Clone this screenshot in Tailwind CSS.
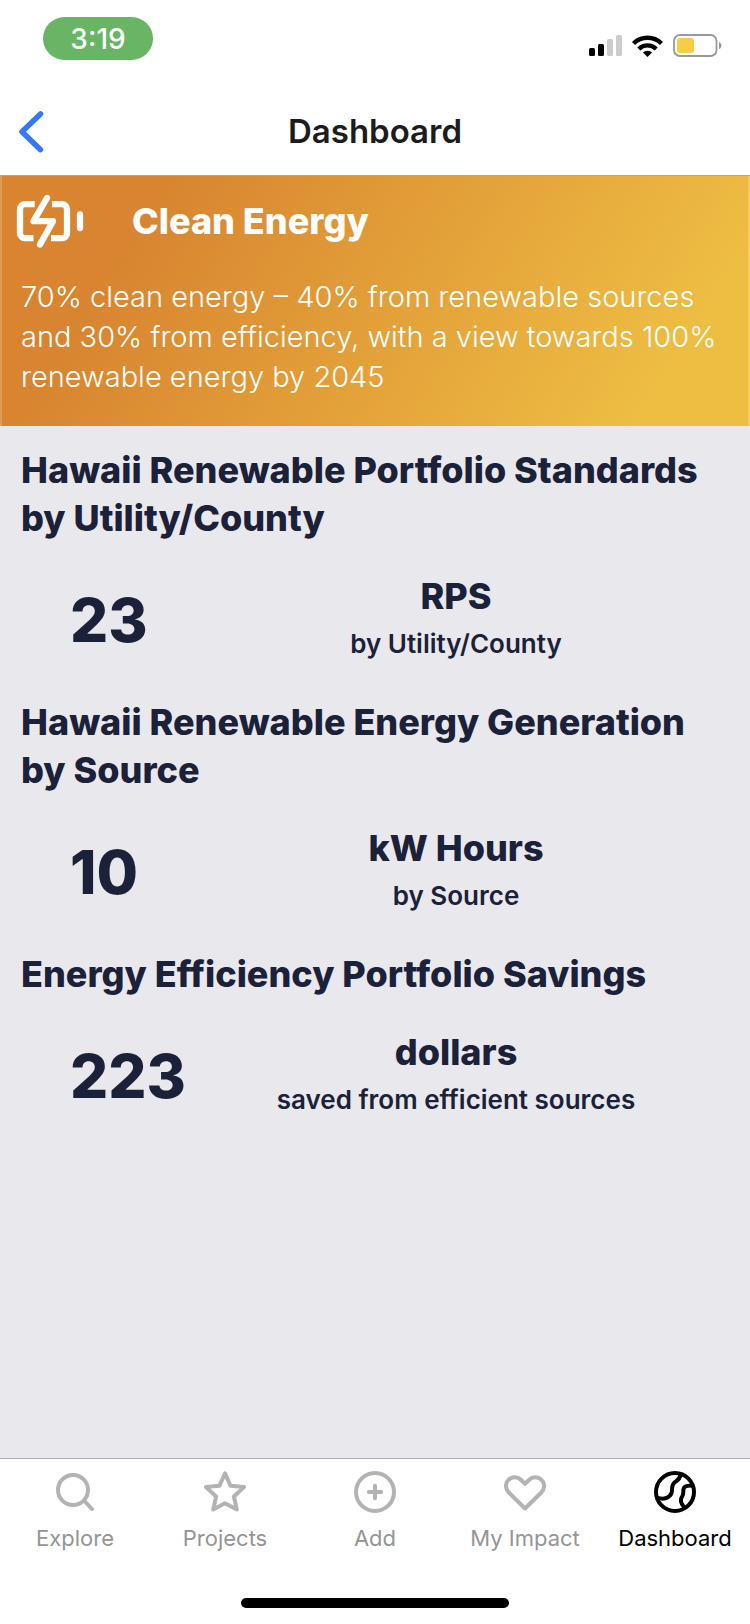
<!DOCTYPE html>
<html lang="en">
<head>
    <meta charset="UTF-8">
    <meta name="viewport" content="width=device-width, initial-scale=1.0">
    <title>Dashboard - Clean Energy</title>
    <script src="https://cdn.jsdelivr.net/npm/@tailwindcss/browser@4"></script>
</head>
<body class="min-h-screen flex flex-col bg-[#e9e8ed] text-[#1a2138] font-['Inter','Liberation_Sans',sans-serif]">
    <!-- Status bar -->
    <div class="flex items-start justify-between h-22 pt-[17px] pl-[43px] pr-7 bg-white">
        <div class="flex items-center justify-center w-[110px] h-[43px] rounded-full bg-[#67b565] text-white text-[28px] font-medium">3:19</div>
        <div class="flex items-center gap-[10px] pt-[17px]">
            <svg class="w-[33px] h-[21px]" viewBox="0 0 33 21">
                <rect x="0" y="13" width="6" height="8" rx="1.5" fill="#000"/>
                <rect x="9" y="9" width="6" height="12" rx="1.5" fill="#000"/>
                <rect x="18" y="4" width="6" height="17" rx="1.5" fill="#ccc"/>
                <rect x="27" y="0" width="6" height="21" rx="1.5" fill="#ccc"/>
            </svg>
            <svg class="w-[31px] h-[22px]" viewBox="0 0 31 22">
                <path d="M1.5 8.5a20 20 0 0 1 28 0" fill="none" stroke="#000" stroke-width="4.4"/>
                <path d="M6.8 14a12.4 12.4 0 0 1 17.4 0" fill="none" stroke="#000" stroke-width="4.2"/>
                <path d="M15.5 22l-4.6-4.4a6.7 6.7 0 0 1 9.2 0z" fill="#000"/>
            </svg>
            <svg class="w-[49px] h-[23px]" viewBox="0 0 49 23">
                <rect x="1" y="1" width="42.5" height="21" rx="6" fill="#fff" stroke="#999" stroke-width="1.8"/>
                <rect x="4" y="4" width="17" height="15" rx="3" fill="#f6cd45"/>
                <path d="M46 8q2.5 1 2.5 3.5T46 15z" fill="#999"/>
            </svg>
        </div>
    </div>

    <!-- Header -->
    <header class="grid grid-cols-[1fr_auto_1fr] items-center h-22 px-[18px] bg-white border-b border-[#a7a7aa]">
        <button type="button" aria-label="Back" class="justify-self-start">
            <svg class="w-[26px] h-[42px]" viewBox="0 0 26 42">
                <path d="M22.5 3L4 20.7l18.5 18" fill="none" stroke="#3478f6" stroke-width="5.5" stroke-linecap="round" stroke-linejoin="round"/>
            </svg>
        </button>
        <h1 class="text-[33px] leading-12 pb-[2px] font-semibold text-[#1c1c1e]">Dashboard</h1>
    </header>

    <main class="grow">
        <!-- Clean energy banner -->
        <section class="pt-[17px] pb-[29px] text-white border-x-2 border-white/20 bg-linear-[122deg,#d88430_18%,#eebe43_88%] bg-origin-border">
            <div class="flex items-center gap-12 px-[14px]">
                <svg class="w-[68px] h-[56px]" viewBox="0 0 68 56" fill="none" stroke="#fff" stroke-width="6.3" stroke-linecap="round" stroke-linejoin="round">
                    <path d="M18.7 11.2H9a5 5 0 0 0-5 5v24a5 5 0 0 0 5 5h8.500M36 11.200h10a5 5 0 0 1 5 5v24a5 5 0 0 1-5 5H35" stroke-linecap="butt"/>
                    <path d="M31 5L17.500 28.200H37L24 51.500"/>
                    <path d="M64 21.500v13.500"/>
                </svg>
                <h2 class="text-[36px] leading-[56px] font-extrabold">Clean Energy</h2>
            </div>
            <p class="mt-7 px-[19px] text-[29px] leading-10 font-light">70% clean energy – 40% from renewable sources and 30% from efficiency, with a view towards 100% renewable energy by 2045</p>
        </section>

        <section class="pt-5 text-[36px] leading-12 font-extrabold">
            <h3 class="px-[21px]">Hawaii Renewable Portfolio Standards by Utility/County</h3>
            <div class="flex items-center py-[30px] pl-[70px] pr-[50px]">
                <div class="w-[142px] text-[60px]">23</div>
                <div class="grow text-center">
                    <div>RPS</div>
                    <div class="text-[26px] font-semibold">by Utility/County</div>
                </div>
            </div>

            <h3 class="px-[21px]">Hawaii Renewable Energy Generation by Source</h3>
            <div class="flex items-center py-[30px] pl-[70px] pr-[50px]">
                <div class="w-[142px] text-[60px]">10</div>
                <div class="grow text-center">
                    <div>kW Hours</div>
                    <div class="text-[26px] font-semibold">by Source</div>
                </div>
            </div>

            <h3 class="px-[21px]">Energy Efficiency Portfolio Savings</h3>
            <div class="flex items-center py-[30px] pl-[70px] pr-[50px]">
                <div class="w-[142px] text-[60px]">223</div>
                <div class="grow text-center">
                    <div>dollars</div>
                    <div class="text-[26px] font-semibold">saved from efficient sources</div>
                </div>
            </div>
        </section>
    </main>

    <!-- Tab bar -->
    <footer class="bg-white border-t border-[#b0b0b4] pt-3 pb-4">
        <nav class="grid grid-cols-5 text-[22px] leading-7 text-[#959595]">
            <a href="#explore" class="flex flex-col items-center gap-[11px]">
                <svg class="w-[42px] h-[42px]" viewBox="0 0 42 42" fill="none" stroke="#b3b3b3" stroke-width="4" stroke-linecap="round">
                    <circle cx="19" cy="19" r="15"/>
                    <path d="M30 29.5l8 8.5"/>
                </svg>
                Explore
            </a>
            <a href="#projects" class="flex flex-col items-center gap-[11px]">
                <svg class="w-[42px] h-[42px]" viewBox="0 0 42 42" fill="none" stroke="#b3b3b3" stroke-width="4" stroke-linejoin="round">
                    <path d="M21 2.3l5.5 12.4L40 16.1 29.9 25.5 32.8 38.5 21 32.3 9.2 38.5l2.9-13L2 16.1l13.5-1.4z"/>
                </svg>
                Projects
            </a>
            <a href="#add" class="flex flex-col items-center gap-[11px]">
                <svg class="w-[42px] h-[42px]" viewBox="0 0 42 42" fill="none" stroke="#b3b3b3" stroke-width="4" stroke-linecap="round">
                    <circle cx="21" cy="21" r="19"/>
                    <path d="M21 14.8v12.4M14.8 21h12.4"/>
                </svg>
                Add
            </a>
            <a href="#impact" class="flex flex-col items-center gap-[11px]">
                <svg class="w-[42px] h-[42px]" viewBox="0 0 42 42" fill="none" stroke="#b3b3b3" stroke-width="4" stroke-linejoin="round">
                    <path d="M21 37.5L4.7 21.5C1 17.5 1 11.8 4.7 8.7 8 5.4 13.6 5.6 16.8 8.7L21 12.8l4.2-4.1c3.2-3.1 8.8-3.3 12.1 0 3.7 3.1 3.7 8.8 0 12.8z"/>
                </svg>
                My Impact
            </a>
            <a href="#dashboard" aria-current="page" class="flex flex-col items-center gap-[11px] text-black">
                <svg class="w-[42px] h-[42px]" viewBox="0 0 42 42" fill="none" stroke="#000" stroke-width="4">
                    <circle cx="21" cy="21" r="19"/>
                    <path d="M3 26.5c4 1.5 8 1.5 11-.2 3.5-2 4.2-4.3 4.1-8.5 0-4 .8-5.6 4-7.5 2.7-1.7 3.9-3.3 4.6-6.8"/>
                    <path d="M38.5 14.5c-4.5 0-7.5.5-8.5 2.2-1.5 2.5.2 5.6-1.6 8.3-1.7 2.7-2.4 4.7-.6 7.7 1 1.7 2 2.3 2.5 4.5"/>
                </svg>
                Dashboard
            </a>
        </nav>
        <!-- Home indicator -->
        <div class="mt-[46px] mx-auto w-[268px] h-[10px] rounded-full bg-black"></div>
    </footer>
</body>
</html>
